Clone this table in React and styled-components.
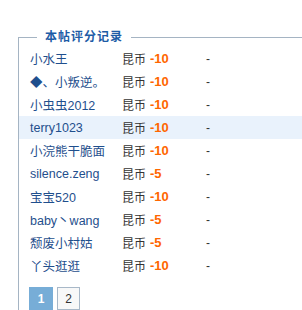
import React from "react";
import styled, { createGlobalStyle } from "styled-components";

const rates = [
  { name: "小水王", score: -10 },
  { name: "◆、小叛逆。", score: -10 },
  { name: "小虫虫2012", score: -10 },
  { name: "terry1023", score: -10, active: true },
  { name: "小浣熊干脆面", score: -10 },
  { name: "silence.zeng", score: -5 },
  { name: "宝宝520", score: -10 },
  { name: "baby丶wang", score: -5 },
  { name: "颓废小村姑", score: -5 },
  { name: "丫头逛逛", score: -10 },
];

const Global = createGlobalStyle`
  body {
    margin: 0;
    background: #fff;
    font-family: "Liberation Sans", "Noto Sans CJK SC", sans-serif;
    font-size: 12px;
  }
`;

const Box = styled.fieldset`
  margin: 29px 0 0 18px;
  padding: 2px 0 0 0;
  border: 0;
  border-top: 1px solid #a5b4c3;
  border-left: 1px solid #a5b4c3;
  min-width: 0;
`;

const Title = styled.legend`
  margin-left: 18px;
  padding: 0 8px;
  font-size: 12px;
  line-height: 16px;
  font-weight: bold;
  color: #1d5ca6;
  letter-spacing: 1px;
`;

const Row = styled.div`
  display: grid;
  grid-template-columns: 92px 28px 56px 1fr;
  align-items: center;
  height: 23px;
  padding-left: 11px;
  background: ${(p) => (p.$active ? "#e9f2fc" : "transparent")};
`;

const Name = styled.a`
  color: #1f4f8d;
  text-decoration: none;
  white-space: nowrap;
  font-size: 12.5px;
`;

const Unit = styled.span`
  color: #333;
`;

const Score = styled.span`
  color: #ff6600;
  font-weight: bold;
  font-size: 13px;
`;

const Note = styled.span`
  color: #333;
`;

const Pager = styled.div`
  display: flex;
  gap: 4px;
  padding: 10px 0 0 10px;
`;

const Page = styled.span`
  box-sizing: border-box;
  width: ${(p) => (p.$current ? "24px" : "23px")};
  height: 23px;
  display: flex;
  align-items: center;
  justify-content: center;
  font-size: 12px;
  color: ${(p) => (p.$current ? "#fff" : "#333")};
  font-weight: ${(p) => (p.$current ? "bold" : "normal")};
  background: ${(p) => (p.$current ? "#77add7" : "#f8f8f8")};
  border: ${(p) => (p.$current ? "none" : "1px solid #a8b8c8")};
`;

export default function App() {
  return (
    <>
      <Global />
      <Box>
        <Title>本帖评分记录</Title>
        {rates.map((r) => (
          <Row key={r.name} $active={r.active}>
            <Name href="#">{r.name}</Name>
            <Unit>昆币</Unit>
            <Score>{r.score}</Score>
            <Note>-</Note>
          </Row>
        ))}
        <Pager>
          <Page $current>1</Page>
          <Page>2</Page>
        </Pager>
      </Box>
    </>
  );
}
